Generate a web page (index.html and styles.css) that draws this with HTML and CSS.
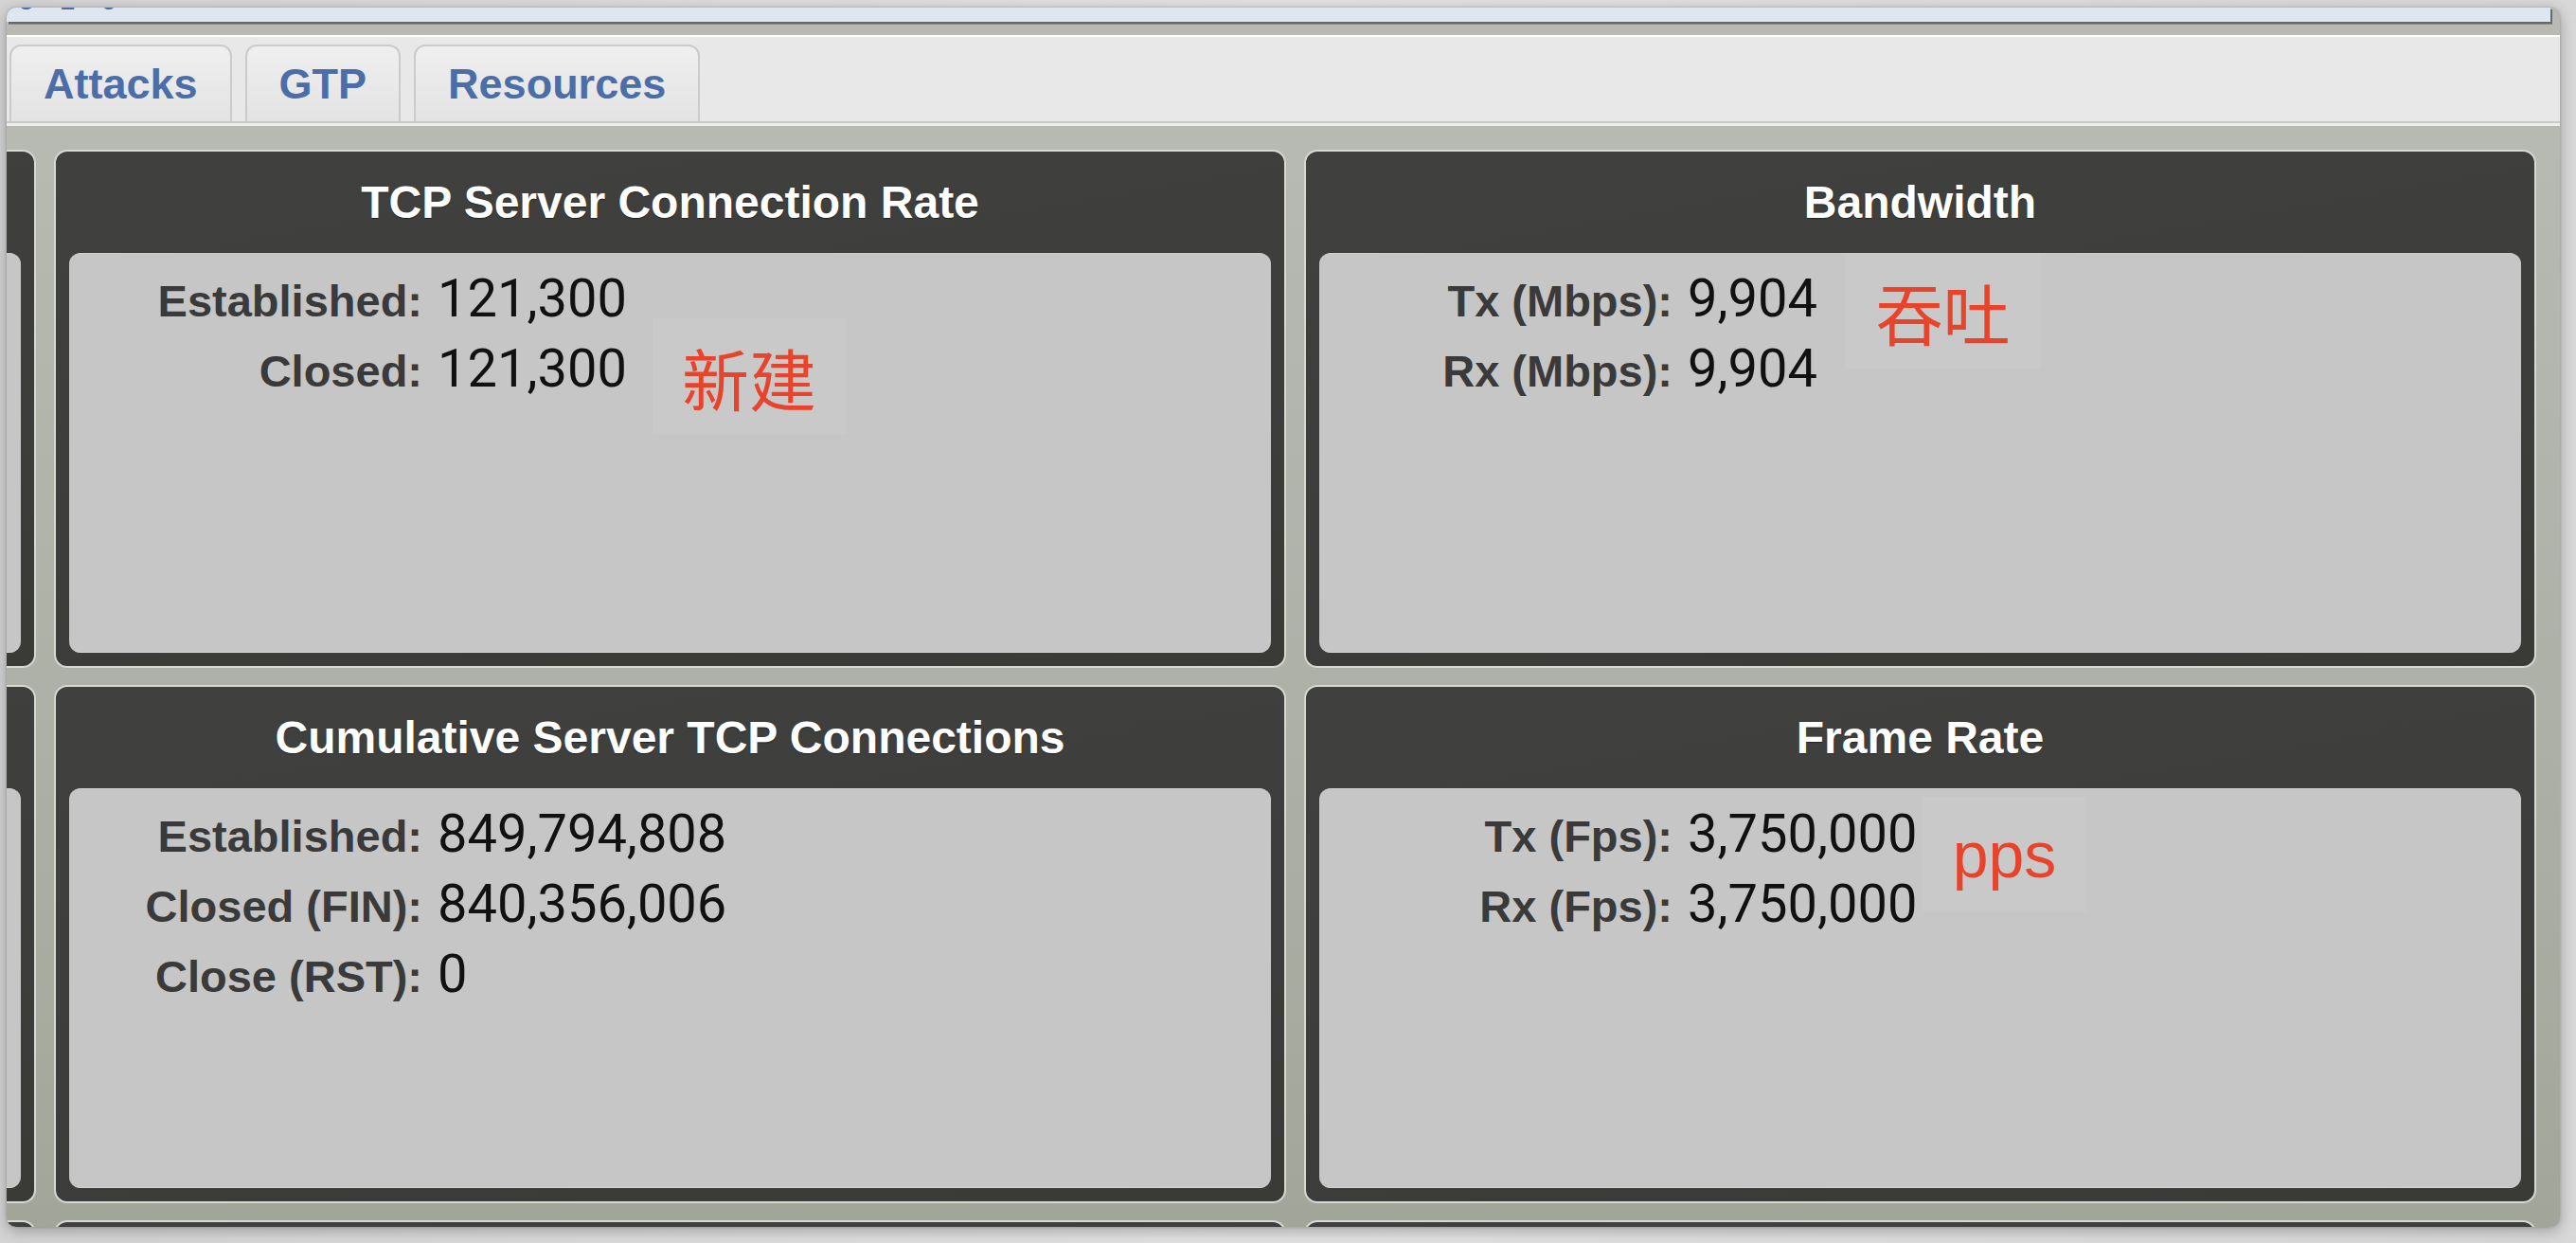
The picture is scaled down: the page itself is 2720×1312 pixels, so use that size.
FILE: index.html
```html
<!DOCTYPE html>
<html lang="en">
<head>
<meta charset="utf-8">
<title>Statistics</title>
<link rel="stylesheet" href="styles.css">
</head>
<body>
<div class="desk">
  <div class="window">
    <div class="topbar"><div class="crumb">5 1 6</div></div>
    <div class="tabbar">
      <div class="tab">Attacks</div>
      <div class="tab">GTP</div>
      <div class="tab">Resources</div>
    </div>
    <div class="content">
      <div class="grid">
        <section class="panel">
          <div class="panel-title"></div>
          <div class="panel-body"></div>
        </section>
        <section class="panel">
          <div class="panel-title">TCP Server Connection Rate</div>
          <div class="panel-body">
            <div class="stats">
              <div class="label">Established:</div><div class="value">121,300</div>
              <div class="label">Closed:</div><div class="value">121,300</div>
            </div>
            <div class="note note-new">新建</div>
          </div>
        </section>
        <section class="panel">
          <div class="panel-title">Bandwidth</div>
          <div class="panel-body">
            <div class="stats">
              <div class="label">Tx (Mbps):</div><div class="value">9,904</div>
              <div class="label">Rx (Mbps):</div><div class="value">9,904</div>
            </div>
            <div class="note note-tput">吞吐</div>
          </div>
        </section>

        <section class="panel">
          <div class="panel-title"></div>
          <div class="panel-body"></div>
        </section>
        <section class="panel">
          <div class="panel-title">Cumulative Server TCP Connections</div>
          <div class="panel-body">
            <div class="stats">
              <div class="label">Established:</div><div class="value">849,794,808</div>
              <div class="label">Closed (FIN):</div><div class="value">840,356,006</div>
              <div class="label">Close (RST):</div><div class="value">0</div>
            </div>
          </div>
        </section>
        <section class="panel">
          <div class="panel-title">Frame Rate</div>
          <div class="panel-body">
            <div class="stats">
              <div class="label">Tx (Fps):</div><div class="value">3,750,000</div>
              <div class="label">Rx (Fps):</div><div class="value">3,750,000</div>
            </div>
            <div class="note note-pps">pps</div>
          </div>
        </section>

        <section class="panel"><div class="panel-title"></div><div class="panel-body"></div></section>
        <section class="panel"><div class="panel-title"></div><div class="panel-body"></div></section>
        <section class="panel"><div class="panel-title"></div><div class="panel-body"></div></section>
      </div>
    </div>
  </div>
</div>
</body>
</html>
```
FILE: styles.css
```css
html, body {
  margin: 0;
  padding: 0;
}

body {
  width: 2720px;
  height: 1312px;
  overflow: hidden;
  background: linear-gradient(90deg, #d4d4d4 0%, #e2e2e2 50%, #d8d8d8 100%);
  font-family: "Liberation Sans", Arial, sans-serif;
}

.desk {
  box-sizing: border-box;
  height: 1312px;
  padding: 8px 17px 0 7px;
}

.window {
  height: 1287px;
  border-radius: 10px;
  overflow: hidden;
  background: #b8bab3;
  display: flex;
  flex-direction: column;
  box-shadow: 0 4px 16px rgba(0, 0, 0, 0.28), 0 0 3px rgba(0, 0, 0, 0.2);
}

.topbar {
  flex: none;
  height: 15px;
  margin-right: 10px;
  margin-bottom: 14px;
  background: #dfe6f0;
  box-shadow: 2px 2px 0 #686868, 2px 3px 0 #8e8f8a;
  overflow: hidden;
}

.crumb {
  margin: -22px 0 0 13px;
  font-size: 28px;
  line-height: 30px;
  font-weight: bold;
  letter-spacing: 10px;
  color: #4b6ea8;
}

.tabbar {
  flex: none;
  box-sizing: border-box;
  height: 93px;
  border-top: 2px solid #ffffff;
  border-bottom: 2px solid #c9c9c9;
  background: #e8e8e8;
  display: flex;
  align-items: flex-end;
  gap: 14px;
  padding-left: 3px;
}

.tab {
  box-sizing: border-box;
  height: 81px;
  padding: 0 34px;
  border: 2px solid #cbcbcb;
  border-bottom: none;
  border-radius: 12px 12px 0 0;
  background: linear-gradient(180deg, #efefef 0%, #e3e3e3 100%);
  color: #4b6ea8;
  font-weight: bold;
  font-size: 45px;
  line-height: 79px;
}

.content {
  flex: 1;
  overflow: hidden;
  border-top: 3px solid #eeeeec;
  padding-top: 25px;
  background: linear-gradient(180deg, #b7bab2 0%, #aeb1a8 50%, #a2a69a 100%);
}

.grid {
  display: grid;
  grid-template-columns: repeat(3, 1301px);
  grid-auto-rows: 547px;
  gap: 18px 19px;
  margin-left: -1270px;
}

.panel {
  box-sizing: border-box;
  border: 2px solid #d6d8d1;
  border-radius: 14px;
  background: linear-gradient(170deg, #40403e 0%, #3d3e3b 60%, #3a3b37 100%);
  padding: 0 14px 14px;
  display: flex;
  flex-direction: column;
}

.panel-title {
  flex: none;
  height: 107px;
  display: flex;
  align-items: center;
  justify-content: center;
  color: #ffffff;
  font-weight: bold;
  font-size: 48px;
  text-shadow: 0 1px 1px rgba(0, 0, 0, 0.45);
  white-space: nowrap;
}

.panel-body {
  flex: 1;
  position: relative;
  box-sizing: border-box;
  padding-top: 10px;
  border-radius: 12px;
  background: #c6c6c6;
  border-top: 1px solid #cfcfcf;
  border-bottom: 1px solid #d6d6d6;
}

.stats {
  display: grid;
  grid-template-columns: 373px auto;
  grid-auto-rows: 74px;
  column-gap: 16px;
  align-items: baseline;
  justify-content: start;
}

.label {
  text-align: right;
  font-weight: bold;
  font-size: 47px;
  line-height: 74px;
  color: #3a3a3a;
  white-space: nowrap;
}

.value {
  font-family: Roboto, "Liberation Sans", sans-serif;
  font-size: 56px;
  line-height: 74px;
  color: #111111;
  white-space: nowrap;
}

.note {
  position: absolute;
  display: flex;
  align-items: center;
  justify-content: center;
  background: rgba(255, 255, 255, 0.06);
  color: #e8432b;
  font-family: "Noto Sans CJK SC", "Liberation Sans", sans-serif;
  font-size: 71px;
  line-height: 1;
}

.note-new {
  left: 616px;
  top: 68px;
  width: 204px;
  height: 122px;
}

.note-tput {
  left: 555px;
  top: 0;
  width: 207px;
  height: 121px;
}

.note-pps {
  left: 637px;
  top: 8px;
  width: 173px;
  height: 121px;
  font-family: "Liberation Sans", Arial, sans-serif;
  font-size: 68px;
}
```
